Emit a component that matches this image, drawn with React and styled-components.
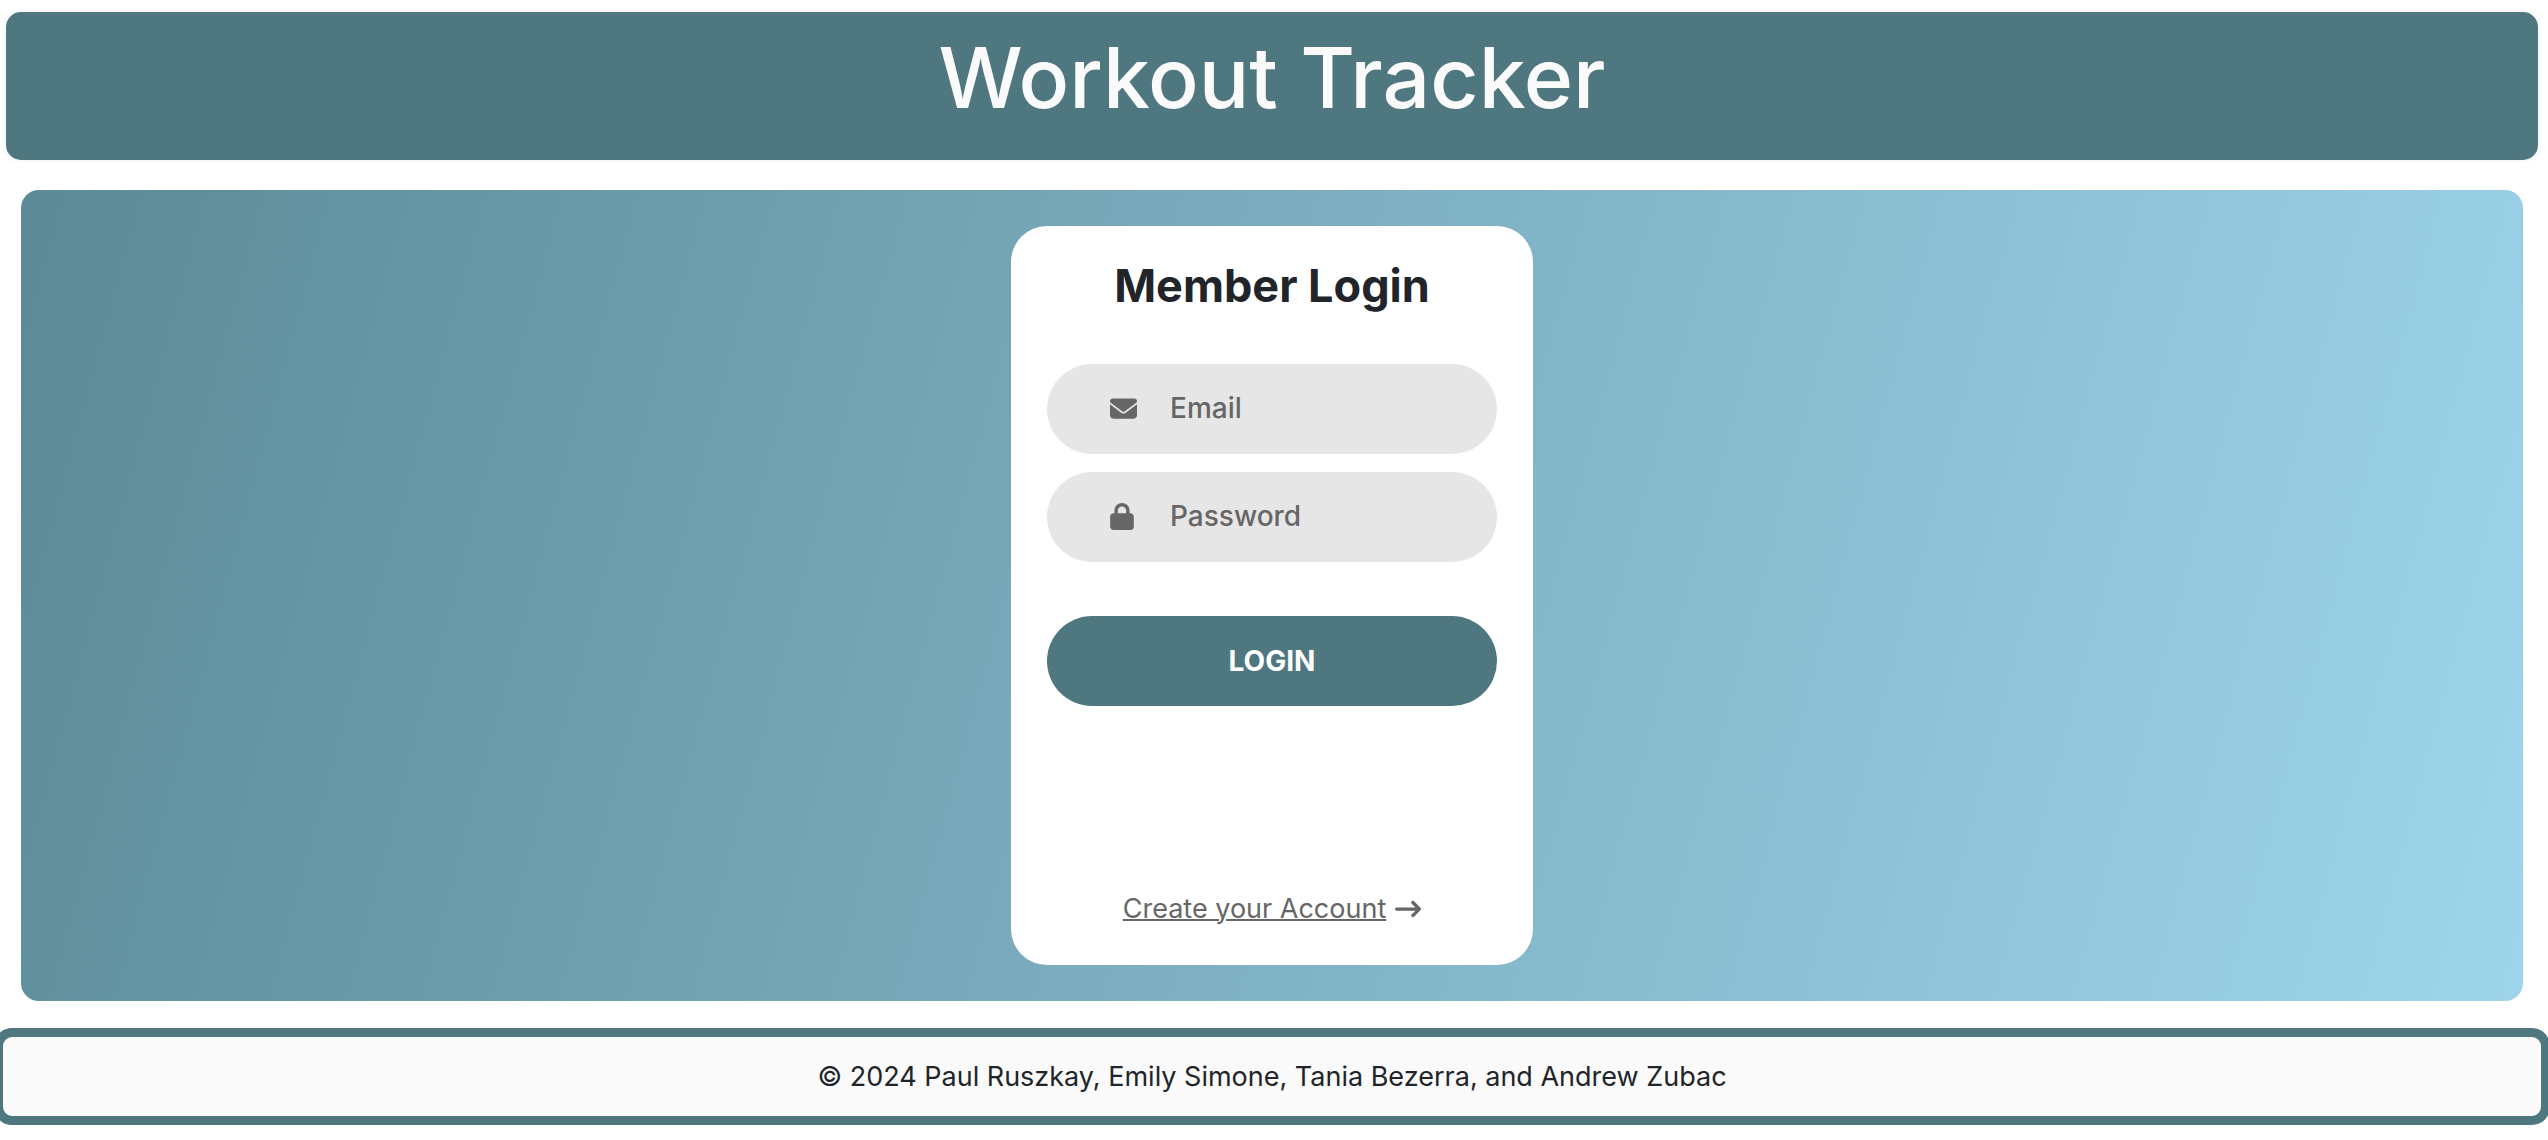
import React from "react";
import styled, { createGlobalStyle } from "styled-components";
import { FaEnvelope, FaLock, FaArrowRightLong } from "react-icons/fa6";

const teal = "#4f7780";
const ink = "#212529";
const muted = "#666666";

const GlobalStyle = createGlobalStyle`
  *, *::before, *::after { box-sizing: border-box; }
  body {
    margin: 0;
    background: #ffffff;
    color: ${ink};
    font-family: Inter, "Open Sans", sans-serif;
    overflow-x: hidden;
  }
`;

const Page = styled.div`
  padding: 9px 4px 15px 0;
`;

const Header = styled.header`
  margin: 0 3px;
  padding: 16px 24px 32px;
  border: 3px solid #fafafa;
  border-radius: 18px;
  background: ${teal};
`;

const SiteTitle = styled.h1`
  margin: 0;
  color: #fafafa;
  font-size: 84px;
  font-weight: 500;
  line-height: 100px;
  text-align: center;
`;

const Main = styled.main`
  display: flex;
  justify-content: center;
  margin: 27px 21px;
  padding: 36px;
  border-radius: 18px;
  background: linear-gradient(105deg, #5c8a97, #9ed5ec);
`;

const Card = styled.form`
  display: flex;
  flex-direction: column;
  width: 522px;
  min-height: 739px;
  padding: 33px 36px 36px;
  border-radius: 36px;
  background: #ffffff;
`;

const CardTitle = styled.h2`
  margin: 0 0 51px;
  font-size: 45px;
  font-weight: 700;
  line-height: 54px;
  text-align: center;
`;

const Field = styled.label`
  display: flex;
  align-items: center;
  gap: 33px;
  height: 90px;
  margin-bottom: 18px;
  padding: 0 45px 2px 63px;
  border-radius: 45px;
  background: #e6e6e6;
  color: ${muted};
  cursor: text;
`;

const FieldIcon = styled.span`
  display: flex;
  flex: 0 0 27px;
`;

const EnvelopeIcon = styled(FaEnvelope)`
  width: 27px;
  height: 27px;
`;

const LockIcon = styled(FaLock)`
  width: 24px;
  height: 27px;
`;

const Input = styled.input`
  flex: 1;
  min-width: 0;
  padding: 0;
  border: 0;
  outline: 0;
  background: transparent;
  color: ${muted};
  font: inherit;
  font-size: 28px;
  font-weight: 500;
  line-height: 40px;

  &::placeholder {
    color: ${muted};
    opacity: 1;
  }
`;

const LoginButton = styled.button`
  height: 90px;
  margin-top: 36px;
  border: 0;
  border-radius: 45px;
  background: ${teal};
  color: #ffffff;
  font: inherit;
  font-size: 28px;
  font-weight: 700;
  line-height: 40px;
  cursor: pointer;
`;

const SignUp = styled.div`
  display: flex;
  align-items: center;
  justify-content: center;
  gap: 9px;
  margin-top: auto;
  color: ${muted};
  font-size: 27px;
  line-height: 40px;
`;

const SignUpLink = styled.a`
  color: inherit;
  text-decoration: underline;
  text-decoration-thickness: 2px;
`;

const Footer = styled.footer`
  margin: 0 -6px;
  padding: 20px 24px 19px;
  border: 9px solid ${teal};
  border-radius: 18px;
  background: #fafafa;
  font-size: 27px;
  line-height: 40px;
  text-align: center;
`;

export default function App() {
  return (
    <>
      <GlobalStyle />
      <Page>
        <Header>
          <SiteTitle>Workout Tracker</SiteTitle>
        </Header>
        <Main>
          <Card onSubmit={(event) => event.preventDefault()}>
            <CardTitle>Member Login</CardTitle>
            <Field>
              <FieldIcon><EnvelopeIcon aria-hidden="true" /></FieldIcon>
              <Input type="email" name="email" placeholder="Email" aria-label="Email" />
            </Field>
            <Field>
              <FieldIcon><LockIcon aria-hidden="true" /></FieldIcon>
              <Input type="password" name="password" placeholder="Password" aria-label="Password" />
            </Field>
            <LoginButton type="submit">LOGIN</LoginButton>
            <SignUp>
              <SignUpLink href="#signup">Create your Account</SignUpLink>
              <FaArrowRightLong size={26} aria-hidden="true" />
            </SignUp>
          </Card>
        </Main>
        <Footer>© 2024 Paul Ruszkay, Emily Simone, Tania Bezerra, and Andrew Zubac</Footer>
      </Page>
    </>
  );
}
